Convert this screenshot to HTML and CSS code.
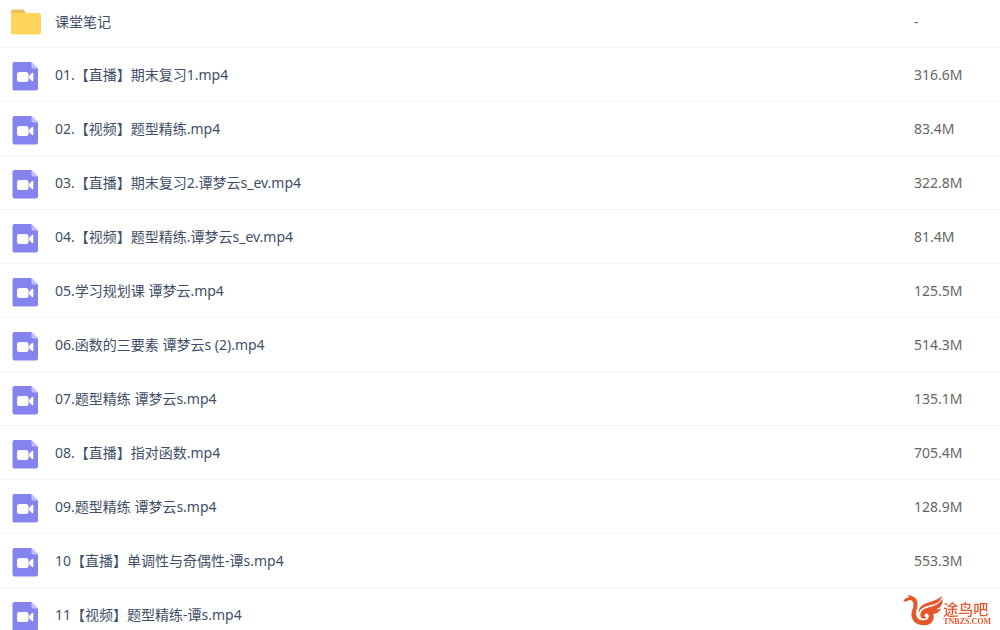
FILE: index.html
```
<!DOCTYPE html>
<html lang="zh-CN">

<head>
    <meta charset="UTF-8">
    <meta name="viewport" content="width=device-width, initial-scale=1.0">
    <title>课堂笔记</title>
    <link rel="stylesheet" href="styles.css">
</head>

<body>
    <!-- file icons, reused by every row -->
    <svg class="sprite" aria-hidden="true">
        <symbol id="icon-folder" viewBox="0 0 32 26">
            <path fill="#edbd58" d="M1 3a2.500 2.500 0 0 1 2.500-2.500h8.500a3 3 0 0 1 2.200 1L16 4v6H1z"/>
            <rect x="1" y="4" width="30" height="21.500" rx="2" fill="#ffd55c"/>
        </symbol>
        <symbol id="icon-video" viewBox="0 0 26 30">
            <path fill="#8583f0" d="M2.500 1h17L26 7.500V27.500a2 2 0 0 1-2 2H2.500a2 2 0 0 1-2-2V3a2 2 0 0 1 2-2z"/>
            <path fill="#c3c2fa" d="M19.500 1L26 7.500h-5a1.500 1.500 0 0 1-1.500-1.500z"/>
            <rect x="5" y="11" width="11.500" height="10" rx="2.500" fill="#fff"/>
            <path fill="#fff" d="M17 15l3-3c.6-.5 1.300-.3 1.300.5v7c0 .8-.7 1-1.300.5l-3-3z"/>
        </symbol>
    </svg>

    <main>
        <table class="file-list">
            <tbody>
                <tr>
                    <td class="icon"><svg class="folder"><use href="#icon-folder"/></svg></td>
                    <td class="name">课堂笔记</td>
                    <td class="size">-</td>
                </tr>
                <tr>
                    <td class="icon"><svg class="video"><use href="#icon-video"/></svg></td>
                    <td class="name">01.【直播】期末复习1.mp4</td>
                    <td class="size">316.6M</td>
                </tr>
                <tr>
                    <td class="icon"><svg class="video"><use href="#icon-video"/></svg></td>
                    <td class="name">02.【视频】题型精练.mp4</td>
                    <td class="size">83.4M</td>
                </tr>
                <tr>
                    <td class="icon"><svg class="video"><use href="#icon-video"/></svg></td>
                    <td class="name">03.【直播】期末复习2.谭梦云s_ev.mp4</td>
                    <td class="size">322.8M</td>
                </tr>
                <tr>
                    <td class="icon"><svg class="video"><use href="#icon-video"/></svg></td>
                    <td class="name">04.【视频】题型精练.谭梦云s_ev.mp4</td>
                    <td class="size">81.4M</td>
                </tr>
                <tr>
                    <td class="icon"><svg class="video"><use href="#icon-video"/></svg></td>
                    <td class="name">05.学习规划课 谭梦云.mp4</td>
                    <td class="size">125.5M</td>
                </tr>
                <tr>
                    <td class="icon"><svg class="video"><use href="#icon-video"/></svg></td>
                    <td class="name">06.函数的三要素 谭梦云s (2).mp4</td>
                    <td class="size">514.3M</td>
                </tr>
                <tr>
                    <td class="icon"><svg class="video"><use href="#icon-video"/></svg></td>
                    <td class="name">07.题型精练 谭梦云s.mp4</td>
                    <td class="size">135.1M</td>
                </tr>
                <tr>
                    <td class="icon"><svg class="video"><use href="#icon-video"/></svg></td>
                    <td class="name">08.【直播】指对函数.mp4</td>
                    <td class="size">705.4M</td>
                </tr>
                <tr>
                    <td class="icon"><svg class="video"><use href="#icon-video"/></svg></td>
                    <td class="name">09.题型精练 谭梦云s.mp4</td>
                    <td class="size">128.9M</td>
                </tr>
                <tr>
                    <td class="icon"><svg class="video"><use href="#icon-video"/></svg></td>
                    <td class="name">10【直播】单调性与奇偶性-谭s.mp4</td>
                    <td class="size">553.3M</td>
                </tr>
                <tr>
                    <td class="icon"><svg class="video"><use href="#icon-video"/></svg></td>
                    <td class="name">11【视频】题型精练-谭s.mp4</td>
                    <td class="size"></td>
                </tr>
            </tbody>
        </table>
    </main>

    <div class="watermark">
        <svg class="bird" viewBox="0 0 120 96" aria-hidden="true">
            <g fill="#e5562a">
                <path d="M1 22C5 13 12 10 19 11C16 8 14 5 16 2C22 6 30 5 36 11C46 20 45 34 41 46C36 64 42 77 58 79C72 80 79 72 77 64C75 58 68 57 65 62C63 67 67 71 72 70C64 79 51 73 52 62C54 48 66 43 78 40C96 36 109 29 118 15C121 30 113 42 99 46C106 47 111 45 114 43C110 55 100 60 91 60C96 79 84 94 63 94C37 94 22 76 26 55C29 42 34 34 30 25C27 17 20 16 14 20C11 23 6 23 1 22z"/>
                <path d="M47 57C46 40 58 31 74 26C94 20 108 15 117 5C114 22 100 30 81 34C63 38 53 44 47 57z"/>
            </g>
        </svg>
        <div class="brand">
            <span class="brand-name">途鸟吧</span>
            <span class="brand-url">TNBZS.COM</span>
        </div>
    </div>
</body>

</html>
```
FILE: styles.css
```
* {
    margin: 0;
    padding: 0;
    box-sizing: border-box;
}

body {
    background-color: #fff;
    font-family: 'Noto Sans', 'Noto Sans CJK SC', sans-serif;
    font-size: 14px;
    line-height: 20px;
    color: #424e67;
    height: 100vh;
    overflow: hidden;
}

.sprite {
    display: none;
}

.file-list {
    width: 100%;
    border-collapse: separate;
    border-spacing: 0;
    table-layout: fixed;
}

.file-list td {
    height: 54px;
    border-bottom: 1px solid #f5f6f8;
    vertical-align: middle;
}

.file-list tr:first-child td {
    height: 48px;
    padding-bottom: 4px;
}

.file-list .icon {
    width: 55px;
    padding-left: 10px;
}

.file-list .size {
    width: 86px;
    color: #666;
}

.icon svg {
    display: block;
}

.folder {
    width: 32px;
    height: 26px;
}

.video {
    width: 26px;
    height: 30px;
    margin-top: 2px;
    margin-left: 2px;
}

/* site mark, floats over the list */
.watermark {
    position: fixed;
    right: 9px;
    bottom: 4px;
    display: flex;
    align-items: flex-end;
}

.bird {
    width: 40px;
    height: 32px;
}

.brand {
    color: #e5562a;
}

.brand span {
    display: block;
}

.brand-name {
    font-size: 15px;
    font-weight: 500;
    line-height: 15px;
}

.brand-url {
    font-family: 'Liberation Serif', serif;
    font-size: 8px;
    font-weight: bold;
    line-height: 9px;
}
```
